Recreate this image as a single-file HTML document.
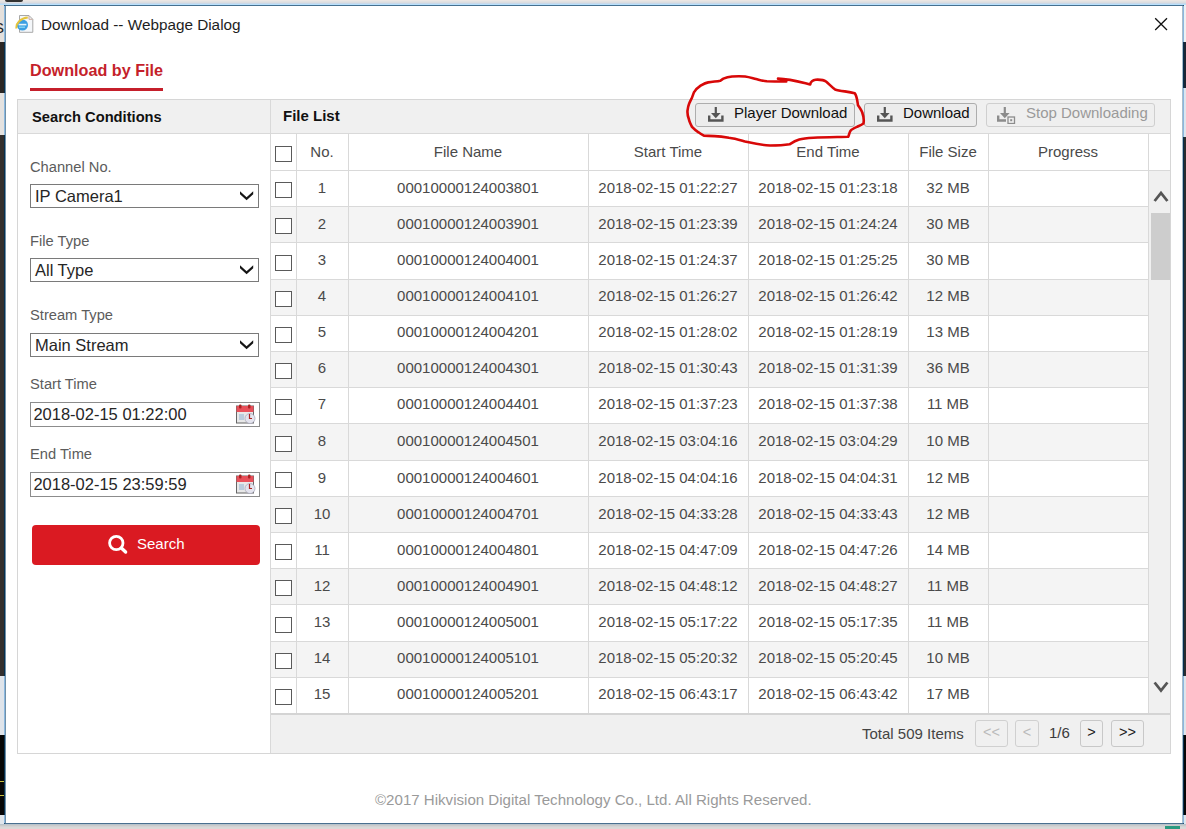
<!DOCTYPE html><html><head><meta charset="utf-8"><title>Download</title><style>
*{margin:0;padding:0;box-sizing:border-box}
html,body{width:1186px;height:829px;overflow:hidden}
body{position:relative;background:#d9d9d9;font-family:"Liberation Sans",sans-serif;color:#333}
.a{position:absolute}
.t{position:absolute;white-space:nowrap;line-height:1}
#dlg{position:absolute;left:4px;top:5px;width:1180px;height:819px;background:#fff;border:1px solid;border-color:#46708f #06304f #4a7090 #06304f;box-shadow:inset 1px 0 #7090a8,inset -1px 0 #a8bccb}
.hl{position:absolute;height:1px;background:#d9d9d9}
.vl{position:absolute;width:1px;background:#d9d9d9}
.lbl{position:absolute;left:30px;font-size:14.7px;color:#5c5c5c;white-space:nowrap;line-height:1}
.sel{position:absolute;left:30px;width:229px;height:24px;border:1px solid #7a7a7a;background:#fff}
.sel span{position:absolute;left:4px;top:3px;font-size:16.5px;color:#262626;line-height:1;white-space:nowrap}
.inp{position:absolute;left:30px;width:230px;height:25px;border:1px solid #8c8c8c;background:#fff}
.inp span{position:absolute;left:2.4px;top:3.3px;font-size:16.5px;color:#262626;line-height:1;white-space:nowrap}
.cell{position:absolute;font-size:15px;color:#4a4a4a;text-align:center;line-height:1;white-space:nowrap}
.cb{position:absolute;left:275px;width:17px;height:16px;border:1.3px solid #5a5a5a;background:#fff}
.btn{position:absolute;top:103px;height:24px;border:1px solid #adadad;border-radius:3px;background:#ececec}
.btn span{position:absolute;top:0.5px;font-size:15px;color:#111;line-height:1;white-space:nowrap}
.pb{position:absolute;top:720px;height:27px;border:1px solid #d0d0d0;border-radius:3px;background:#f0f0f0;font-size:14.5px;text-align:center;line-height:23px}
</style></head><body>
<div class="a" style="left:0;top:0px;width:1186px;height:1px;background:#ebe6e3"></div>
<div class="a" style="left:0;top:1px;width:1186px;height:1px;background:#e2e2e2"></div>
<div class="a" style="left:0;top:2px;width:1186px;height:1px;background:#dcdde0"></div>
<div class="a" style="left:0;top:3px;width:1186px;height:1px;background:#c8d8e8"></div>
<div class="a" style="left:0;top:4px;width:1186px;height:1px;background:#b8e0fc"></div>
<div class="a" style="left:5px;top:0;width:18px;height:2px;background:#333;border-radius:0 0 3px 3px"></div>
<div class="a" style="left:0;top:5px;width:4px;height:37px;background:#e4e0dc"></div>
<div class="a" style="left:0;top:42px;width:4px;height:51px;background:#2a2624"></div>
<div class="a" style="left:0;top:93px;width:4px;height:42px;background:#e4e2e0"></div>
<div class="a" style="left:0;top:135px;width:4px;height:541px;background:#332f2d"></div>
<div class="a" style="left:0;top:676px;width:4px;height:59px;background:#dfe4ea"></div>
<div class="a" style="left:0;top:735px;width:4px;height:80px;background:#070707"></div>
<div class="a" style="left:0;top:815px;width:4px;height:9px;background:#e0e6ec"></div>
<div class="a" style="left:1184px;top:5px;width:2px;height:37px;background:#eef0f2"></div>
<div class="a" style="left:1184px;top:42px;width:2px;height:46px;background:#1c2634"></div>
<div class="a" style="left:1184px;top:88px;width:2px;height:49px;background:#dde5ee"></div>
<div class="a" style="left:1184px;top:137px;width:2px;height:539px;background:#2a2c2e"></div>
<div class="a" style="left:1184px;top:676px;width:2px;height:59px;background:#dfe4ea"></div>
<div class="a" style="left:1184px;top:735px;width:2px;height:80px;background:#070707"></div>
<div class="a" style="left:1184px;top:815px;width:2px;height:9px;background:#e0e6ec"></div>
<div class="a" style="left:0;top:781px;width:4px;height:1px;background:#c8c040"></div>
<div class="a" style="left:0;top:795px;width:4px;height:1px;background:#c8c040"></div>
<div class="a" style="left:0;top:824px;width:1186px;height:1px;background:#b8c4cc"></div>
<div class="a" style="left:0;top:825px;width:1186px;height:1px;background:#cacaca"></div>
<div class="a" style="left:0;top:826px;width:1186px;height:1px;background:#d2d2d4"></div>
<div class="a" style="left:0;top:827px;width:1186px;height:1px;background:#d8d8d8"></div>
<div class="a" style="left:0;top:828px;width:1186px;height:1px;background:#dcd8d6"></div>
<div class="a" style="left:1165px;top:826px;width:15px;height:3px;background:#2a9a80"></div>
<div id="dlg"></div>
<div class="a" style="left:4px;top:6px;width:1px;height:36px;background:#8ab8e0"></div>
<div class="a" style="left:4px;top:93px;width:1px;height:42px;background:#8ab8e0"></div>
<div class="a" style="left:4px;top:676px;width:1px;height:59px;background:#8ab8e0"></div>
<div class="a" style="left:4px;top:815px;width:1px;height:8px;background:#8ab8e0"></div>
<div class="a" style="left:1183px;top:6px;width:1px;height:36px;background:#8ab8e0"></div>
<div class="a" style="left:1183px;top:88px;width:1px;height:49px;background:#8ab8e0"></div>
<div class="a" style="left:1183px;top:676px;width:1px;height:59px;background:#8ab8e0"></div>
<div class="a" style="left:1183px;top:815px;width:1px;height:8px;background:#8ab8e0"></div>
<div class="a" style="left:0;top:18px;width:4px;height:18px;overflow:hidden"><div class="t" style="left:-6px;top:2px;font-size:15px;color:#222">Sa</div></div>
<svg class="a" style="left:15px;top:15px" width="19" height="18" viewBox="0 0 19 18">
<path d="M4.5 0.5 H14 L17.8 4.3 V17.3 H4.5 Z" fill="#f4f7fa" stroke="#a8a8a8" stroke-width="1"/>
<path d="M14 0.8 V4.3 H17.5" fill="none" stroke="#c09888" stroke-width="0.8"/>
<circle cx="7.4" cy="10" r="5.6" fill="#3c9fe2"/>
<path d="M3.6 9.6 H11.4" stroke="#e4f4fc" stroke-width="1.6"/>
<path d="M4 12.2 H10" stroke="#8ad8f6" stroke-width="1.3"/>
<path d="M1.5 13.5 C0.5 8.5, 6 3, 12.8 2.6" stroke="#e6c43a" stroke-width="2" fill="none"/>
</svg>
<div class="t" style="left:41px;top:17px;font-size:15.3px;color:#1e1e1e">Download -- Webpage Dialog</div>
<svg class="a" style="left:1154px;top:17px" width="14" height="14" viewBox="0 0 14 14"><path d="M1.2 1.2 L13 13 M13 1.2 L1.2 13" stroke="#111" stroke-width="1.3"/></svg>
<div class="t" style="left:30px;top:62px;font-size:16.2px;font-weight:bold;color:#c51f2b">Download by File</div>
<div class="a" style="left:30px;top:88px;width:133px;height:3px;background:#c51f2b"></div>
<div class="a" style="left:17px;top:99px;width:1154px;height:655px;border:1px solid #d6d6d6;background:#fff"></div>
<div class="a" style="left:18px;top:100px;width:1152px;height:33px;background:#f0f0f0"></div>
<div class="hl" style="left:18px;top:133px;width:1152px"></div>
<div class="vl" style="left:270px;top:100px;height:653px"></div>
<div class="t" style="left:32px;top:110px;font-size:14.7px;font-weight:bold;color:#111">Search Conditions</div>
<div class="t" style="left:283px;top:108px;font-size:15px;font-weight:bold;color:#111">File List</div>
<div class="lbl" style="top:159.6px">Channel No.</div>
<div class="sel" style="top:184px"><span>IP Camera1</span></div><svg class="a" style="left:238px;top:189px" width="17" height="13" viewBox="0 0 17 13"><path d="M2 2.3 L8.6 8.2 L15.2 2.3 V5.3 L8.6 11.2 L2 5.3 Z" fill="#151515"/></svg>
<div class="lbl" style="top:233.6px">File Type</div>
<div class="sel" style="top:258px"><span>All Type</span></div><svg class="a" style="left:238px;top:263px" width="17" height="13" viewBox="0 0 17 13"><path d="M2 2.3 L8.6 8.2 L15.2 2.3 V5.3 L8.6 11.2 L2 5.3 Z" fill="#151515"/></svg>
<div class="lbl" style="top:307.6px">Stream Type</div>
<div class="sel" style="top:333px"><span>Main Stream</span></div><svg class="a" style="left:238px;top:338px" width="17" height="13" viewBox="0 0 17 13"><path d="M2 2.3 L8.6 8.2 L15.2 2.3 V5.3 L8.6 11.2 L2 5.3 Z" fill="#151515"/></svg>
<div class="lbl" style="top:376.6px">Start Time</div>
<div class="inp" style="top:402px"><span>2018-02-15 01:22:00</span></div><svg class="a" style="left:236px;top:404px" width="20" height="20" viewBox="0 0 20 20">
<rect x="0.5" y="2" width="17" height="17" fill="#e8e8e8" stroke="#666" stroke-width="1"/>
<rect x="0.5" y="2" width="17" height="6" fill="#e8505a"/>
<rect x="3" y="0.5" width="2.5" height="4" rx="1" fill="#a22"/>
<rect x="12" y="0.5" width="2.5" height="4" rx="1" fill="#a22"/>
<rect x="3" y="10" width="5" height="6" fill="#bcd"/>
<circle cx="14" cy="14.5" r="5" fill="#e4e4ee" stroke="#aab" stroke-width="0.8"/>
<path d="M13.5 10 V14.5 H16" stroke="#a22" stroke-width="1.2" fill="none"/>
</svg>
<div class="lbl" style="top:446.6px">End Time</div>
<div class="inp" style="top:472px"><span>2018-02-15 23:59:59</span></div><svg class="a" style="left:236px;top:474px" width="20" height="20" viewBox="0 0 20 20">
<rect x="0.5" y="2" width="17" height="17" fill="#e8e8e8" stroke="#666" stroke-width="1"/>
<rect x="0.5" y="2" width="17" height="6" fill="#e8505a"/>
<rect x="3" y="0.5" width="2.5" height="4" rx="1" fill="#a22"/>
<rect x="12" y="0.5" width="2.5" height="4" rx="1" fill="#a22"/>
<rect x="3" y="10" width="5" height="6" fill="#bcd"/>
<circle cx="14" cy="14.5" r="5" fill="#e4e4ee" stroke="#aab" stroke-width="0.8"/>
<path d="M13.5 10 V14.5 H16" stroke="#a22" stroke-width="1.2" fill="none"/>
</svg>
<div class="a" style="left:32px;top:525px;width:228px;height:40px;background:#da1a22;border-radius:4px"></div>
<svg class="a" style="left:106px;top:533px" width="24" height="24" viewBox="0 0 24 24"><circle cx="10.3" cy="10" r="6.7" stroke="#fff" stroke-width="2.8" fill="none"/><path d="M15.6 15.3 L19.6 19" stroke="#fff" stroke-width="3.4" stroke-linecap="round"/></svg>
<div class="t" style="left:137px;top:536px;font-size:15px;color:#fff">Search</div>
<div class="btn" style="left:695px;width:160px"><span style="left:38px">Player Download</span></div><svg class="a" style="left:708px;top:107px" width="16" height="16" viewBox="0 0 16 16"><path d="M7.8 0 V7" stroke="#555" stroke-width="2.2"/><path d="M3 6 H12.6 L7.8 11.2 Z" fill="#555"/><path d="M1.2 8.5 V13.5 H14.4 V8.5" stroke="#555" stroke-width="2.4" fill="none"/></svg>
<div class="btn" style="left:864px;width:113px"><span style="left:38px">Download</span></div><svg class="a" style="left:877px;top:107px" width="16" height="16" viewBox="0 0 16 16"><path d="M7.8 0 V7" stroke="#555" stroke-width="2.2"/><path d="M3 6 H12.6 L7.8 11.2 Z" fill="#555"/><path d="M1.2 8.5 V13.5 H14.4 V8.5" stroke="#555" stroke-width="2.4" fill="none"/></svg>
<div class="btn" style="left:986px;width:169px;border-color:#cfcfcf;background:#efefef"><span style="left:39px;color:#9a9a9a">Stop Downloading</span></div>
<svg class="a" style="left:997px;top:107px" width="19" height="17" viewBox="0 0 19 17"><path d="M7.8 0 V7" stroke="#8c8c8c" stroke-width="2.2"/><path d="M3 6 H12.6 L7.8 11.2 Z" fill="#8c8c8c"/><path d="M1.2 8.5 V13.5 H9" stroke="#8c8c8c" stroke-width="2.4" fill="none"/><rect x="11" y="10" width="6.5" height="6.5" stroke="#8c8c8c" stroke-width="1.3" fill="none"/><rect x="13.2" y="12.2" width="2" height="2" fill="#8c8c8c"/></svg>
<div class="cell" style="left:296px;width:52px;top:144px">No.</div>
<div class="cell" style="left:348px;width:240px;top:144px">File Name</div>
<div class="cell" style="left:588px;width:160px;top:144px">Start Time</div>
<div class="cell" style="left:748px;width:160px;top:144px">End Time</div>
<div class="cell" style="left:908px;width:80px;top:144px">File Size</div>
<div class="cell" style="left:988px;width:160px;top:144px">Progress</div>
<div class="cb" style="top:146px"></div>
<div class="hl" style="left:271px;top:170px;width:899px"></div>
<div class="hl" style="left:271px;top:206px;width:877px"></div>
<div class="cell" style="left:296px;width:52px;top:180px">1</div>
<div class="cell" style="left:348px;width:240px;top:180px">00010000124003801</div>
<div class="cell" style="left:588px;width:160px;top:180px">2018-02-15 01:22:27</div>
<div class="cell" style="left:748px;width:160px;top:180px">2018-02-15 01:23:18</div>
<div class="cell" style="left:908px;width:80px;top:180px">32 MB</div>
<div class="cb" style="top:182px"></div>
<div class="a" style="left:271px;top:207px;width:877px;height:35px;background:#f4f4f4"></div>
<div class="hl" style="left:271px;top:242px;width:877px"></div>
<div class="cell" style="left:296px;width:52px;top:216px">2</div>
<div class="cell" style="left:348px;width:240px;top:216px">00010000124003901</div>
<div class="cell" style="left:588px;width:160px;top:216px">2018-02-15 01:23:39</div>
<div class="cell" style="left:748px;width:160px;top:216px">2018-02-15 01:24:24</div>
<div class="cell" style="left:908px;width:80px;top:216px">30 MB</div>
<div class="cb" style="top:218px"></div>
<div class="hl" style="left:271px;top:279px;width:877px"></div>
<div class="cell" style="left:296px;width:52px;top:252px">3</div>
<div class="cell" style="left:348px;width:240px;top:252px">00010000124004001</div>
<div class="cell" style="left:588px;width:160px;top:252px">2018-02-15 01:24:37</div>
<div class="cell" style="left:748px;width:160px;top:252px">2018-02-15 01:25:25</div>
<div class="cell" style="left:908px;width:80px;top:252px">30 MB</div>
<div class="cb" style="top:255px"></div>
<div class="a" style="left:271px;top:280px;width:877px;height:35px;background:#f4f4f4"></div>
<div class="hl" style="left:271px;top:315px;width:877px"></div>
<div class="cell" style="left:296px;width:52px;top:288px">4</div>
<div class="cell" style="left:348px;width:240px;top:288px">00010000124004101</div>
<div class="cell" style="left:588px;width:160px;top:288px">2018-02-15 01:26:27</div>
<div class="cell" style="left:748px;width:160px;top:288px">2018-02-15 01:26:42</div>
<div class="cell" style="left:908px;width:80px;top:288px">12 MB</div>
<div class="cb" style="top:291px"></div>
<div class="hl" style="left:271px;top:351px;width:877px"></div>
<div class="cell" style="left:296px;width:52px;top:324px">5</div>
<div class="cell" style="left:348px;width:240px;top:324px">00010000124004201</div>
<div class="cell" style="left:588px;width:160px;top:324px">2018-02-15 01:28:02</div>
<div class="cell" style="left:748px;width:160px;top:324px">2018-02-15 01:28:19</div>
<div class="cell" style="left:908px;width:80px;top:324px">13 MB</div>
<div class="cb" style="top:327px"></div>
<div class="a" style="left:271px;top:352px;width:877px;height:35px;background:#f4f4f4"></div>
<div class="hl" style="left:271px;top:387px;width:877px"></div>
<div class="cell" style="left:296px;width:52px;top:360px">6</div>
<div class="cell" style="left:348px;width:240px;top:360px">00010000124004301</div>
<div class="cell" style="left:588px;width:160px;top:360px">2018-02-15 01:30:43</div>
<div class="cell" style="left:748px;width:160px;top:360px">2018-02-15 01:31:39</div>
<div class="cell" style="left:908px;width:80px;top:360px">36 MB</div>
<div class="cb" style="top:363px"></div>
<div class="hl" style="left:271px;top:423px;width:877px"></div>
<div class="cell" style="left:296px;width:52px;top:396px">7</div>
<div class="cell" style="left:348px;width:240px;top:396px">00010000124004401</div>
<div class="cell" style="left:588px;width:160px;top:396px">2018-02-15 01:37:23</div>
<div class="cell" style="left:748px;width:160px;top:396px">2018-02-15 01:37:38</div>
<div class="cell" style="left:908px;width:80px;top:396px">11 MB</div>
<div class="cb" style="top:399px"></div>
<div class="a" style="left:271px;top:424px;width:877px;height:36px;background:#f4f4f4"></div>
<div class="hl" style="left:271px;top:460px;width:877px"></div>
<div class="cell" style="left:296px;width:52px;top:433px">8</div>
<div class="cell" style="left:348px;width:240px;top:433px">00010000124004501</div>
<div class="cell" style="left:588px;width:160px;top:433px">2018-02-15 03:04:16</div>
<div class="cell" style="left:748px;width:160px;top:433px">2018-02-15 03:04:29</div>
<div class="cell" style="left:908px;width:80px;top:433px">10 MB</div>
<div class="cb" style="top:436px"></div>
<div class="hl" style="left:271px;top:496px;width:877px"></div>
<div class="cell" style="left:296px;width:52px;top:470px">9</div>
<div class="cell" style="left:348px;width:240px;top:470px">00010000124004601</div>
<div class="cell" style="left:588px;width:160px;top:470px">2018-02-15 04:04:16</div>
<div class="cell" style="left:748px;width:160px;top:470px">2018-02-15 04:04:31</div>
<div class="cell" style="left:908px;width:80px;top:470px">12 MB</div>
<div class="cb" style="top:472px"></div>
<div class="a" style="left:271px;top:497px;width:877px;height:35px;background:#f4f4f4"></div>
<div class="hl" style="left:271px;top:532px;width:877px"></div>
<div class="cell" style="left:296px;width:52px;top:506px">10</div>
<div class="cell" style="left:348px;width:240px;top:506px">00010000124004701</div>
<div class="cell" style="left:588px;width:160px;top:506px">2018-02-15 04:33:28</div>
<div class="cell" style="left:748px;width:160px;top:506px">2018-02-15 04:33:43</div>
<div class="cell" style="left:908px;width:80px;top:506px">12 MB</div>
<div class="cb" style="top:508px"></div>
<div class="hl" style="left:271px;top:568px;width:877px"></div>
<div class="cell" style="left:296px;width:52px;top:542px">11</div>
<div class="cell" style="left:348px;width:240px;top:542px">00010000124004801</div>
<div class="cell" style="left:588px;width:160px;top:542px">2018-02-15 04:47:09</div>
<div class="cell" style="left:748px;width:160px;top:542px">2018-02-15 04:47:26</div>
<div class="cell" style="left:908px;width:80px;top:542px">14 MB</div>
<div class="cb" style="top:544px"></div>
<div class="a" style="left:271px;top:569px;width:877px;height:35px;background:#f4f4f4"></div>
<div class="hl" style="left:271px;top:604px;width:877px"></div>
<div class="cell" style="left:296px;width:52px;top:578px">12</div>
<div class="cell" style="left:348px;width:240px;top:578px">00010000124004901</div>
<div class="cell" style="left:588px;width:160px;top:578px">2018-02-15 04:48:12</div>
<div class="cell" style="left:748px;width:160px;top:578px">2018-02-15 04:48:27</div>
<div class="cell" style="left:908px;width:80px;top:578px">11 MB</div>
<div class="cb" style="top:580px"></div>
<div class="hl" style="left:271px;top:641px;width:877px"></div>
<div class="cell" style="left:296px;width:52px;top:614px">13</div>
<div class="cell" style="left:348px;width:240px;top:614px">00010000124005001</div>
<div class="cell" style="left:588px;width:160px;top:614px">2018-02-15 05:17:22</div>
<div class="cell" style="left:748px;width:160px;top:614px">2018-02-15 05:17:35</div>
<div class="cell" style="left:908px;width:80px;top:614px">11 MB</div>
<div class="cb" style="top:617px"></div>
<div class="a" style="left:271px;top:642px;width:877px;height:35px;background:#f4f4f4"></div>
<div class="hl" style="left:271px;top:677px;width:877px"></div>
<div class="cell" style="left:296px;width:52px;top:650px">14</div>
<div class="cell" style="left:348px;width:240px;top:650px">00010000124005101</div>
<div class="cell" style="left:588px;width:160px;top:650px">2018-02-15 05:20:32</div>
<div class="cell" style="left:748px;width:160px;top:650px">2018-02-15 05:20:45</div>
<div class="cell" style="left:908px;width:80px;top:650px">10 MB</div>
<div class="cb" style="top:653px"></div>
<div class="hl" style="left:271px;top:713px;width:877px"></div>
<div class="cell" style="left:296px;width:52px;top:686px">15</div>
<div class="cell" style="left:348px;width:240px;top:686px">00010000124005201</div>
<div class="cell" style="left:588px;width:160px;top:686px">2018-02-15 06:43:17</div>
<div class="cell" style="left:748px;width:160px;top:686px">2018-02-15 06:43:42</div>
<div class="cell" style="left:908px;width:80px;top:686px">17 MB</div>
<div class="cb" style="top:689px"></div>
<div class="vl" style="left:296px;top:133px;height:580px"></div>
<div class="vl" style="left:348px;top:133px;height:580px"></div>
<div class="vl" style="left:588px;top:133px;height:580px"></div>
<div class="vl" style="left:748px;top:133px;height:580px"></div>
<div class="vl" style="left:908px;top:133px;height:580px"></div>
<div class="vl" style="left:988px;top:133px;height:580px"></div>
<div class="vl" style="left:1148px;top:133px;height:580px"></div>
<div class="a" style="left:271px;top:713px;width:899px;height:2px;background:#d4d4d4"></div>
<div class="a" style="left:1149px;top:171px;width:21px;height:542px;background:#f0f0f0"></div>
<svg class="a" style="left:1152px;top:189px" width="18" height="14" viewBox="0 0 18 14"><path d="M2.6 12 L9 4 L15.4 12" stroke="#555" stroke-width="2.8" fill="none"/></svg>
<div class="a" style="left:1151px;top:213px;width:19px;height:67px;background:#cdcdcd"></div>
<svg class="a" style="left:1152px;top:680px" width="18" height="14" viewBox="0 0 18 14"><path d="M2.6 2.5 L9 10.5 L15.4 2.5" stroke="#555" stroke-width="2.8" fill="none"/></svg>
<div class="a" style="left:271px;top:715px;width:899px;height:38px;background:#f0f0f0"></div>
<div class="t" style="left:862px;top:726px;font-size:15px;color:#444">Total 509 Items</div>
<div class="pb" style="left:975px;width:33px;color:#bbb">&lt;&lt;</div>
<div class="pb" style="left:1015px;width:24px;color:#bbb">&lt;</div>
<div class="t" style="left:1049px;top:725px;font-size:15px;color:#3a3a3a">1/6</div>
<div class="pb" style="left:1080px;width:23px;color:#222;border-color:#c8c8c8">&gt;</div>
<div class="pb" style="left:1111px;width:33px;color:#222;border-color:#c8c8c8">&gt;&gt;</div>
<div class="t" style="left:375px;top:792px;font-size:15.08px;color:#9a9a9a">&copy;2017 Hikvision Digital Technology Co., Ltd. All Rights Reserved.</div>
<svg class="a" style="left:0;top:0" width="1186" height="829" viewBox="0 0 1186 829"><path d="M778 78.6 C790 79, 800 82, 810.2 84.5 C810.5 82, 813 80, 815.6 79.7 C820 79.5, 824 80, 826 81.5 C829 84, 832 87.5, 835 89.4 C840 91, 848 91.5, 854.7 93.2 C857 96, 857.5 102, 858 105.2 C860 108, 862 111, 862.3 112.8 C863.8 117, 864 121, 863.4 123.6 C861 125.5, 858.5 126, 856.9 126.9 C853 128.5, 851 130, 850.3 131.2 C849 133.5, 849 135.5, 848.2 136.7 C840 137, 825 137, 813.4 137.7 C800 138.5, 797 139.5, 789.5 144.3 C782 145.5, 776 145.5, 770 145.5 C760 145, 752 143, 745.1 141.5 C738 139.5, 735 138.5, 728.9 137.7 C722 136.5, 718 136.2, 714.7 136.1 C709 136, 706 135.8, 703.9 135.6 C701 134, 700 133.5, 698.5 132.3 C695 130, 693 128, 692 126.9 C690 123, 689.3 121.5, 688.9 119.3 C687.3 115, 687.3 113, 687.5 110.6 C688 106, 688.8 104.5, 689.4 103 C690.5 100.5, 691.5 99, 692 97.6 C693 95, 693.5 93.5, 694.1 92.1 C696 89, 698.5 87, 700.6 85.6 C703.5 84, 706 82.8, 708.2 82.4 C713 81.5, 717 81.5, 720.2 80.7 C722 80, 722.5 79, 723.4 78.6 C726 77.5, 729 76.8, 732.1 76.5 C737 76.2, 741 76.2, 745.1 76.5 C749 77, 752 78, 756 79 C760 80, 763 81, 766.9 81.3 C773 81.5, 780 81.5, 786.3 81.5" stroke="#d80808" stroke-width="2.6" fill="none" stroke-linecap="round" stroke-linejoin="round"/></svg>
</body></html>
